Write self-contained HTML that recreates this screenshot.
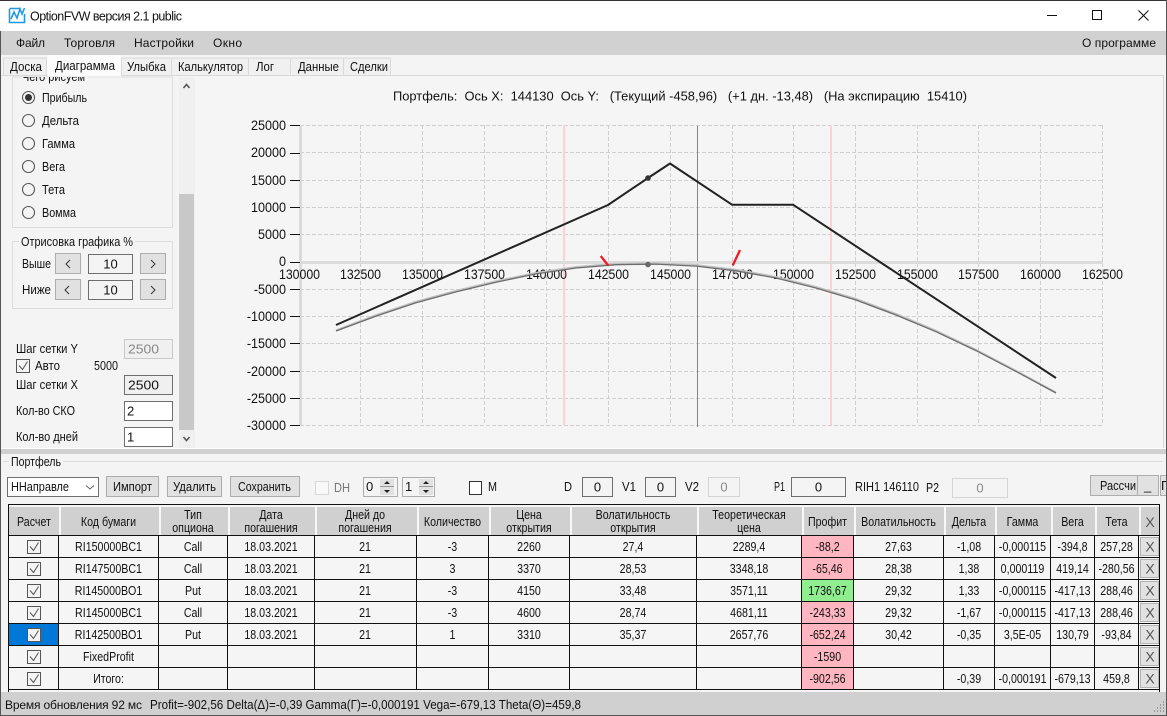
<!DOCTYPE html>
<html><head><meta charset="utf-8"><title>OptionFVW</title>
<style>
html,body{margin:0;padding:0;width:1167px;height:716px;overflow:hidden;background:#f4f4f4}
svg{display:block;font-family:"Liberation Sans",sans-serif;font-size:13px;fill:#111}
text{white-space:pre}
.r{shape-rendering:crispEdges}
.ax text{font-size:14px;fill:#111}
.c text{text-anchor:middle;font-size:13px}
.w text{font-size:12px}
.x text{font-size:14px;fill:#555;text-anchor:middle}
</style></head><body>
<svg width="1167" height="716" viewBox="0 0 1167 716" xmlns="http://www.w3.org/2000/svg">
<rect width="1167" height="716" fill="#f4f4f4"/>
<!-- title -->
<g class="r"><rect width="1167" height="31" fill="#fff"/><rect width="1167" height="1" fill="#333"/></g>
<path d="M9.500 9v13.500h15V14" fill="none" stroke="#1e9be0" stroke-width="1.600"/>
<path d="M9.500 8.500h11M11 19l3-7 3 6 3-9 2 5 2.500-6" fill="none" stroke="#1e9be0" stroke-width="1.600"/>
<text x="30" y="20.500" textLength="152" font-size="12.500">OptionFVW версия 2.1 public</text>
<path d="M1047 15.500h10M1092.500 10.500h9v9h-9zM1138.500 10.500l10 10M1148.500 10.500l-10 10" fill="none" stroke="#111" stroke-width="1"/>
<!-- menu -->
<rect class="r" y="31" width="1167" height="24" fill="#d1d1d1"/>
<g class="w">
<text x="16" y="47" textLength="29">Файл</text>
<text x="64" y="47" textLength="51">Торговля</text>
<text x="134" y="47" textLength="60">Настройки</text>
<text x="213" y="47" textLength="29">Окно</text>
<text x="1082" y="47" textLength="74">О программе</text>
</g>
<!-- tabs -->
<g class="r" fill="#f0f0f0" stroke="#d9d9d9">
<path d="M3.500 76V58h43v18M121.500 76V58h50v18M171.500 76V58h77v18M248.500 76V58h42v18M290.500 76V58h53v18M343.500 76V58h47v18"/>
<path d="M.5 75.500H1163.500V448" fill="none"/>
</g>
<rect class="r" x="47" y="55" width="74" height="23" fill="#fcfcfc"/>
<text x="10" y="71" textLength="32" lengthAdjust="spacingAndGlyphs">Доска</text>
<text x="55" y="70" textLength="60" lengthAdjust="spacingAndGlyphs">Диаграмма</text>
<text x="127" y="71" textLength="39" lengthAdjust="spacingAndGlyphs">Улыбка</text>
<text x="178" y="71" textLength="65" lengthAdjust="spacingAndGlyphs">Калькулятор</text>
<text x="256" y="71" textLength="18" lengthAdjust="spacingAndGlyphs">Лог</text>
<text x="298" y="71" textLength="41" lengthAdjust="spacingAndGlyphs">Данные</text>
<text x="350" y="71" textLength="38" lengthAdjust="spacingAndGlyphs">Сделки</text>
<!-- left border -->
<rect class="r" x="0" y="31" width="1" height="685" fill="#555"/>
<rect class="r" x="1166" y="0" width="1" height="716" fill="#555"/>
<!-- left panel -->
<rect class="r" x="12.500" y="77" width="160" height="150.500" fill="none" stroke="#dcdcdc"/>
<svg x="0" y="77" width="178" height="372" viewBox="0 77 178 372" overflow="hidden">
<rect x="20" y="77" width="68" height="6" fill="#f4f4f4"/>
<text x="22" y="81" textLength="63" lengthAdjust="spacingAndGlyphs" fill="#111">Чего рисуем</text>
</svg>
<g fill="#f4f4f4" stroke="#555" stroke-width="1.100">
<circle cx="28.500" cy="97.500" r="6"/><circle cx="28.500" cy="120.500" r="6"/><circle cx="28.500" cy="143.500" r="6"/><circle cx="28.500" cy="166.500" r="6"/><circle cx="28.500" cy="189.500" r="6"/><circle cx="28.500" cy="212.500" r="6"/>
</g>
<circle cx="28.500" cy="97.500" r="3.500" fill="#333"/>
<text x="42" y="102" textLength="45" lengthAdjust="spacingAndGlyphs">Прибыль</text>
<text x="42" y="125" textLength="37" lengthAdjust="spacingAndGlyphs">Дельта</text>
<text x="42" y="148" textLength="33" lengthAdjust="spacingAndGlyphs">Гамма</text>
<text x="42" y="171" textLength="23" lengthAdjust="spacingAndGlyphs">Вега</text>
<text x="42" y="194" textLength="23" lengthAdjust="spacingAndGlyphs">Тета</text>
<text x="42" y="217" textLength="34" lengthAdjust="spacingAndGlyphs">Вомма</text>
<!-- scrollbar -->
<g class="r"><rect x="179" y="77" width="16" height="371" fill="#f0f0f0"/><rect x="179" y="194" width="15" height="236" fill="#c8c8c8"/></g>
<path d="M183.500 88l3-3.500 3 3.500M183.500 437l3 3.500 3-3.500" fill="none" stroke="#555" stroke-width="1.600"/>
<!-- group 2 -->
<rect class="r" x="12.500" y="241.500" width="160" height="67" fill="none" stroke="#dcdcdc"/>
<rect class="r" x="19" y="238" width="116" height="8" fill="#f4f4f4"/>
<text x="21" y="246" textLength="112" lengthAdjust="spacingAndGlyphs">Отрисовка графика %</text>
<text x="22" y="268" textLength="29" lengthAdjust="spacingAndGlyphs">Выше</text>
<text x="22" y="294" textLength="29" lengthAdjust="spacingAndGlyphs">Ниже</text>
<g class="r" fill="#e1e1e1" stroke="#adadad">
<rect x="55.500" y="253.500" width="25" height="20"/><rect x="140.500" y="253.500" width="25" height="20"/>
<rect x="55.500" y="279.500" width="25" height="20"/><rect x="140.500" y="279.500" width="25" height="20"/>
</g>
<g class="r" fill="#f4f4f4" stroke="#6e6e6e">
<rect x="88.500" y="254.500" width="44" height="19"/><rect x="88.500" y="280.500" width="44" height="19"/>
</g>
<text x="110.500" y="268.500" text-anchor="middle">10</text><text x="110.500" y="294.500" text-anchor="middle">10</text>
<path d="M70 260l-4 4 4 4M69 286l-4 4 4 4M151 260l4 4-4 4M151 286l4 4-4 4" fill="none" stroke="#333"/>
<!-- settings -->
<text x="16" y="353" textLength="62" lengthAdjust="spacingAndGlyphs">Шаг сетки Y</text>
<rect class="r" x="124.500" y="339.500" width="48" height="19" fill="#f0f0f0" stroke="#c8c8c8"/>
<text x="128" y="353.500" textLength="31" lengthAdjust="spacingAndGlyphs" fill="#888">2500</text>
<rect class="r" x="16.500" y="359.500" width="13" height="13" fill="#f4f4f4" stroke="#555"/>
<path d="M19 365.500l3.500 4 5-8" fill="none" stroke="#555"/>
<text x="35" y="370" textLength="25" lengthAdjust="spacingAndGlyphs">Авто</text>
<text x="94" y="370" textLength="24" lengthAdjust="spacingAndGlyphs">5000</text>
<text x="16" y="389" textLength="62" lengthAdjust="spacingAndGlyphs">Шаг сетки X</text>
<rect class="r" x="124.500" y="375.500" width="48" height="19" fill="#f0f0f0" stroke="#6e6e6e"/>
<text x="128" y="389.500" textLength="31" lengthAdjust="spacingAndGlyphs">2500</text>
<text x="16" y="415" textLength="59" lengthAdjust="spacingAndGlyphs">Кол-во СКО</text>
<rect class="r" x="124.500" y="401.500" width="48" height="19" fill="#fff" stroke="#6e6e6e"/>
<text x="127" y="415.500">2</text>
<text x="16" y="441" textLength="62" lengthAdjust="spacingAndGlyphs">Кол-во дней</text>
<rect class="r" x="124.500" y="427.500" width="48" height="19" fill="#fff" stroke="#6e6e6e"/>
<text x="127" y="441.500">1</text>
<!-- chart -->
<rect class="r" x="195" y="77" width="968" height="371" fill="#f5f5f5"/>
<text x="393" y="100.500" textLength="574" lengthAdjust="spacingAndGlyphs">Портфель:  Ось X:  144130  Ось Y:   (Текущий -458,96)   (+1 дн. -13,48)   (На экспирацию  15410)</text>
<g stroke="#cfcfcf" stroke-dasharray="4 2" fill="none" shape-rendering="crispEdges">
<path d="M300 125.500H1103M300 152.500H1103M300 180.500H1103M300 207.500H1103M300 234.500H1103M300 289.500H1103M300 316.500H1103M300 343.500H1103M300 371.500H1103M300 398.500H1103M300 425.500H1103"/>
<path d="M360.500 125V425M422.500 125V425M484.500 125V425M546.500 125V425M608.500 125V425M670.500 125V425M732.500 125V425M793.500 125V425M855.500 125V425M917.500 125V425M978.500 125V425M1040.500 125V425M1102.500 125V425"/>
</g>
<g class="r">
<rect x="563" y="125" width="2" height="300" fill="#ffd0d8"/><rect x="830" y="125" width="2" height="300" fill="#ffd0d8"/>
<rect x="697" y="126" width="1" height="301" fill="#7c848c"/>
<rect x="299" y="125" width="3" height="300" fill="#dadada"/>
<rect x="299" y="261" width="804" height="3" fill="#dcdcdc"/>
</g>
<path d="M290 125.500h10M290 153.500h10M290 180.500h10M290 207.500h10M290 234.500h10M290 262.500h10M290 289.500h10M290 316.500h10M290 343.500h10M290 371.500h10M290 398.500h10M290 425.500h10" stroke="#111" class="r"/>
<g class="ax">
<g text-anchor="end" transform="translate(286,0) scale(.9,1)">
<text y="130">25000</text><text y="157">20000</text><text y="185">15000</text><text y="212">10000</text><text y="239">5000</text><text y="266">0</text><text y="294">-5000</text><text y="321">-10000</text><text y="348">-15000</text><text y="376">-20000</text><text y="403">-25000</text><text y="430">-30000</text>
</g>
<g text-anchor="middle">
<text x="299.500" y="279" textLength="41" lengthAdjust="spacingAndGlyphs">130000</text><text x="360.500" y="279" textLength="41" lengthAdjust="spacingAndGlyphs">132500</text><text x="422.500" y="279" textLength="41" lengthAdjust="spacingAndGlyphs">135000</text><text x="484.500" y="279" textLength="41" lengthAdjust="spacingAndGlyphs">137500</text><text x="546.500" y="279" textLength="41" lengthAdjust="spacingAndGlyphs">140000</text><text x="608.500" y="279" textLength="41" lengthAdjust="spacingAndGlyphs">142500</text><text x="670.500" y="279" textLength="41" lengthAdjust="spacingAndGlyphs">145000</text><text x="732.500" y="279" textLength="41" lengthAdjust="spacingAndGlyphs">147500</text><text x="793.500" y="279" textLength="41" lengthAdjust="spacingAndGlyphs">150000</text><text x="855.500" y="279" textLength="41" lengthAdjust="spacingAndGlyphs">152500</text><text x="917.500" y="279" textLength="41" lengthAdjust="spacingAndGlyphs">155000</text><text x="978.500" y="279" textLength="41" lengthAdjust="spacingAndGlyphs">157500</text><text x="1040.500" y="279" textLength="41" lengthAdjust="spacingAndGlyphs">160000</text><text x="1102.500" y="279" textLength="41" lengthAdjust="spacingAndGlyphs">162500</text>
</g></g>
<polyline fill="none" stroke="#c2c2c2" stroke-width="1.500" stroke-linejoin="round" points="336,330.200 376,315 416,301.500 456,290.600 496,281 536,272.700 576,266.800 616,263.500 656,263 696,264.900 736,269.500 776,276.700 816,286.700 856,298.700 896,313.700 936,330.500 976,349.500 1016,370.500 1056,392.300"/>
<polyline fill="none" stroke="#6c6c6c" stroke-width="1.300" stroke-linejoin="round" points="336,331 376,316.100 416,302.800 456,291.900 496,282.200 536,273.900 576,268 616,264.700 656,264.100 696,266.100 736,270.800 776,278 816,288 856,300 896,315 936,331.700 976,350.600 1016,371.400 1056,393"/>
<polyline fill="none" stroke="#222" stroke-width="2" stroke-linejoin="round" points="336,325 608,205 648,178 670,163.500 732,204.700 793,204.700 1056,378"/>
<circle cx="648" cy="178" r="2.800" fill="#333"/><circle cx="648" cy="264.500" r="2.800" fill="#666"/>
<path d="M600.700 256l7.600 9.500M740 250l-7.300 15.500" stroke="#ee1c25" stroke-width="2.300" fill="none"/>
<!-- splitter -->
<g class="r"><rect x="1" y="448" width="1165" height="1" fill="#fff"/><rect x="1" y="449" width="1165" height="5" fill="#d0d0d0"/>
<rect x="3" y="461" width="1160" height="1" fill="#dedede"/><rect x="9" y="456" width="54" height="10" fill="#f4f4f4"/></g>
<text x="11" y="466" textLength="50" lengthAdjust="spacingAndGlyphs">Портфель</text>
<!-- toolbar -->
<rect class="r" x="7.500" y="477.500" width="91" height="19" fill="#fff" stroke="#6e6e6e"/>
<text x="11" y="491" textLength="58" lengthAdjust="spacingAndGlyphs">ННаправле</text>
<path d="M86 485.500l4 3.500 4-3.500" fill="none" stroke="#666"/>
<g class="r" fill="#e1e1e1" stroke="#adadad">
<rect x="106.500" y="476.500" width="52" height="20"/><rect x="167.500" y="476.500" width="54" height="20"/><rect x="230.500" y="476.500" width="69" height="20"/>
<rect x="1090.500" y="475.500" width="47" height="20"/><rect x="1137.500" y="475.500" width="21" height="20"/><rect x="1160.500" y="475.500" width="8" height="20"/>
</g>
<text x="113" y="491" textLength="39" lengthAdjust="spacingAndGlyphs">Импорт</text>
<text x="173" y="491" textLength="43" lengthAdjust="spacingAndGlyphs">Удалить</text>
<text x="238" y="491" textLength="53" lengthAdjust="spacingAndGlyphs">Сохранить</text>
<text x="1100" y="490" textLength="36" lengthAdjust="spacingAndGlyphs">Рассчи</text>
<text x="1144" y="490">_</text>
<text x="1161" y="490">П</text>
<rect class="r" x="1166" y="470" width="1" height="30" fill="#555"/>
<rect class="r" x="315.500" y="481.500" width="13" height="13" fill="#f8f8f8" stroke="#d8d8d8"/>
<text x="334" y="492" textLength="16" lengthAdjust="spacingAndGlyphs" fill="#777">DH</text>
<g class="r" fill="#f4f4f4" stroke="#adadad">
<rect x="363.500" y="477.500" width="34" height="19"/><rect x="402.500" y="477.500" width="32" height="19"/>
</g>
<g class="r" fill="#e1e1e1"><rect x="380" y="479" width="14" height="16"/><rect x="419" y="479" width="14" height="16"/><rect x="380" y="486" width="14" height="1" fill="#999"/><rect x="419" y="486" width="14" height="1" fill="#999"/></g>
<path d="M387 481l-3 3h6zM387 493l-3-3h6zM426 481l-3 3h6zM426 493l-3-3h6z" fill="#222"/>
<text x="366" y="491">0</text><text x="405" y="491">1</text>
<rect class="r" x="469.500" y="481.500" width="12" height="13" fill="#fff" stroke="#333"/>
<text x="488" y="491" textLength="9" lengthAdjust="spacingAndGlyphs">M</text>
<text x="564" y="491" textLength="8" lengthAdjust="spacingAndGlyphs">D</text>
<text x="622" y="491" textLength="14" lengthAdjust="spacingAndGlyphs">V1</text>
<text x="685" y="491" textLength="14" lengthAdjust="spacingAndGlyphs">V2</text>
<text x="774" y="491" textLength="11" lengthAdjust="spacingAndGlyphs">P1</text>
<g class="r" fill="#f4f4f4" stroke="#6e6e6e"><rect x="582.500" y="477.500" width="30" height="19"/><rect x="645.500" y="477.500" width="30" height="19"/><rect x="791.500" y="477.500" width="54" height="19"/></g>
<g class="r" fill="#f4f4f4" stroke="#d4d4d4"><rect x="708.500" y="477.500" width="31" height="19"/><rect x="952.500" y="478.500" width="55" height="19"/></g>
<text x="597.500" y="491.500" text-anchor="middle">0</text><text x="660.500" y="491.500" text-anchor="middle">0</text><text x="724" y="491.500" text-anchor="middle" fill="#888">0</text><text x="818.500" y="491.500" text-anchor="middle">0</text><text x="980" y="492.500" text-anchor="middle" fill="#888">0</text>
<text x="855" y="491" textLength="64" lengthAdjust="spacingAndGlyphs">RIH1 146110</text>
<text x="926" y="492" textLength="13" lengthAdjust="spacingAndGlyphs">P2</text>
<!-- table -->
<g class="r">
<rect x="8" y="504" width="1152" height="188" fill="#f5f5f5"/>
<rect x="9" y="507" width="1150" height="28" fill="#d0d0d0"/>
<rect x="9" y="624" width="49" height="21" fill="#0078d7"/>
<g fill="#ffb6c1"><rect x="802" y="536" width="51" height="21"/><rect x="802" y="558" width="51" height="21"/><rect x="802" y="602" width="51" height="21"/><rect x="802" y="624" width="51" height="21"/><rect x="802" y="646" width="51" height="21"/><rect x="802" y="668" width="51" height="21"/></g>
<rect x="802" y="580" width="51" height="21" fill="#90ee90"/>
<g fill="#f8f8f8"><rect x="59" y="507" width="2" height="28"/><rect x="159" y="507" width="2" height="28"/><rect x="228" y="507" width="2" height="28"/><rect x="315" y="507" width="2" height="28"/><rect x="417" y="507" width="2" height="28"/><rect x="489" y="507" width="2" height="28"/><rect x="570" y="507" width="2" height="28"/><rect x="697" y="507" width="2" height="28"/><rect x="802" y="507" width="2" height="28"/><rect x="854" y="507" width="2" height="28"/><rect x="944" y="507" width="2" height="28"/><rect x="995" y="507" width="2" height="28"/><rect x="1051" y="507" width="2" height="28"/><rect x="1095" y="507" width="2" height="28"/><rect x="1139" y="507" width="2" height="28"/></g>
<g fill="#111">
<rect x="8" y="504" width="1152" height="1"/>
<rect x="8" y="535" width="1152" height="1"/><rect x="8" y="557" width="1152" height="1"/><rect x="8" y="579" width="1152" height="1"/><rect x="8" y="601" width="1152" height="1"/><rect x="8" y="623" width="1152" height="1"/><rect x="8" y="645" width="1152" height="1"/><rect x="8" y="667" width="1152" height="1"/><rect x="8" y="689" width="1152" height="1"/>
<rect x="8" y="504" width="1" height="188"/><rect x="1159" y="504" width="1" height="188"/>
<rect x="58" y="535" width="1" height="155"/><rect x="158" y="535" width="1" height="155"/><rect x="227" y="535" width="1" height="155"/><rect x="314" y="535" width="1" height="155"/><rect x="416" y="535" width="1" height="155"/><rect x="488" y="535" width="1" height="155"/><rect x="569" y="535" width="1" height="155"/><rect x="696" y="535" width="1" height="155"/><rect x="801" y="535" width="1" height="155"/><rect x="853" y="535" width="1" height="155"/><rect x="943" y="535" width="1" height="155"/><rect x="994" y="535" width="1" height="155"/><rect x="1050" y="535" width="1" height="155"/><rect x="1094" y="535" width="1" height="155"/><rect x="1138" y="535" width="1" height="155"/>
</g>
<g fill="#e1e1e1" stroke="#b4b4b4"><rect x="1140.500" y="537.500" width="18" height="18"/><rect x="1140.500" y="559.500" width="18" height="18"/><rect x="1140.500" y="581.500" width="18" height="18"/><rect x="1140.500" y="603.500" width="18" height="18"/><rect x="1140.500" y="625.500" width="18" height="18"/><rect x="1140.500" y="647.500" width="18" height="18"/><rect x="1140.500" y="669.500" width="18" height="18"/></g>
<g fill="#f4f4f4" stroke="#555"><rect x="27.500" y="540.500" width="13" height="13"/><rect x="27.500" y="562.500" width="13" height="13"/><rect x="27.500" y="584.500" width="13" height="13"/><rect x="27.500" y="606.500" width="13" height="13"/><rect x="27.500" y="628.500" width="13" height="13"/><rect x="27.500" y="650.500" width="13" height="13"/><rect x="27.500" y="672.500" width="13" height="13"/></g>
</g>
<path d="M30 546.500l3.500 4 5-8M30 568.500l3.500 4 5-8M30 590.500l3.500 4 5-8M30 612.500l3.500 4 5-8M30 634.500l3.500 4 5-8M30 656.500l3.500 4 5-8M30 678.500l3.500 4 5-8" fill="none" stroke="#555"/>
<g class="c">
<g transform="translate(34,0) scale(.82,1)"><text y="526">Расчет</text></g>
<g transform="translate(108.500,0) scale(.82,1)"><text y="526">Код бумаги</text><text y="551">RI150000BC1</text><text y="573">RI147500BC1</text><text y="595">RI145000BO1</text><text y="617">RI145000BC1</text><text y="639">RI142500BO1</text><text y="661">FixedProfit</text><text y="683">Итого:</text></g>
<g transform="translate(193,0) scale(.82,1)"><text y="519">Тип</text><text y="532">опциона</text><text y="551">Call</text><text y="573">Call</text><text y="595">Put</text><text y="617">Call</text><text y="639">Put</text></g>
<g transform="translate(271,0) scale(.82,1)"><text y="519">Дата</text><text y="532">погашения</text><text y="551">18.03.2021</text><text y="573">18.03.2021</text><text y="595">18.03.2021</text><text y="617">18.03.2021</text><text y="639">18.03.2021</text></g>
<g transform="translate(365,0) scale(.82,1)"><text y="519">Дней до</text><text y="532">погашения</text><text y="551">21</text><text y="573">21</text><text y="595">21</text><text y="617">21</text><text y="639">21</text></g>
<g transform="translate(452.500,0) scale(.82,1)"><text y="526">Количество</text><text y="551">-3</text><text y="573">3</text><text y="595">-3</text><text y="617">-3</text><text y="639">1</text></g>
<g transform="translate(529,0) scale(.82,1)"><text y="519">Цена</text><text y="532">открытия</text><text y="551">2260</text><text y="573">3370</text><text y="595">4150</text><text y="617">4600</text><text y="639">3310</text></g>
<g transform="translate(633,0) scale(.82,1)"><text y="519">Волатильность</text><text y="532">открытия</text><text y="551">27,4</text><text y="573">28,53</text><text y="595">33,48</text><text y="617">28,74</text><text y="639">35,37</text></g>
<g transform="translate(749,0) scale(.82,1)"><text y="519">Теоретическая</text><text y="532">цена</text><text y="551">2289,4</text><text y="573">3348,18</text><text y="595">3571,11</text><text y="617">4681,11</text><text y="639">2657,76</text></g>
<g transform="translate(827.500,0) scale(.82,1)"><text y="526">Профит</text><text y="551">-88,2</text><text y="573">-65,46</text><text y="595">1736,67</text><text y="617">-243,33</text><text y="639">-652,24</text><text y="661">-1590</text><text y="683">-902,56</text></g>
<g transform="translate(898.500,0) scale(.82,1)"><text y="526">Волатильность</text><text y="551">27,63</text><text y="573">28,38</text><text y="595">29,32</text><text y="617">29,32</text><text y="639">30,42</text></g>
<g transform="translate(969,0) scale(.82,1)"><text y="526">Дельта</text><text y="551">-1,08</text><text y="573">1,38</text><text y="595">1,33</text><text y="617">-1,67</text><text y="639">-0,35</text><text y="683">-0,39</text></g>
<g transform="translate(1022.500,0) scale(.82,1)"><text y="526">Гамма</text><text y="551">-0,000115</text><text y="573">0,000119</text><text y="595">-0,000115</text><text y="617">-0,000115</text><text y="639">3,5E-05</text><text y="683">-0,000191</text></g>
<g transform="translate(1072.500,0) scale(.82,1)"><text y="526">Вега</text><text y="551">-394,8</text><text y="573">419,14</text><text y="595">-417,13</text><text y="617">-417,13</text><text y="639">130,79</text><text y="683">-679,13</text></g>
<g transform="translate(1116.500,0) scale(.82,1)"><text y="526">Тета</text><text y="551">257,28</text><text y="573">-280,56</text><text y="595">288,46</text><text y="617">288,46</text><text y="639">-93,84</text><text y="683">459,8</text></g>
</g>
<g class="x">
<text x="1150" y="527">X</text><text x="1150" y="551.500">X</text><text x="1150" y="573.500">X</text><text x="1150" y="595.500">X</text><text x="1150" y="617.500">X</text><text x="1150" y="639.500">X</text><text x="1150" y="661.500">X</text><text x="1150" y="683.500">X</text>
</g>
<!-- status -->
<g class="r"><rect x="1" y="692" width="1165" height="23" fill="#d0d0d0"/><rect x="0" y="715" width="1167" height="1" fill="#555"/></g>
<text x="5" y="709" textLength="137" font-size="12">Время обновления 92 мс</text>
<text x="150" y="709" textLength="431" lengthAdjust="spacingAndGlyphs">Profit=-902,56 Delta(Δ)=-0,39 Gamma(Г)=-0,000191 Vega=-679,13 Theta(Θ)=459,8</text>
<path d="M1163 702h1M1160 705h1M1163 705h1M1157 708h1M1160 708h1M1163 708h1M1154 711h1M1157 711h1M1160 711h1M1163 711h1" stroke="#999" stroke-width="2" fill="none"/>
</svg>
</body></html>
